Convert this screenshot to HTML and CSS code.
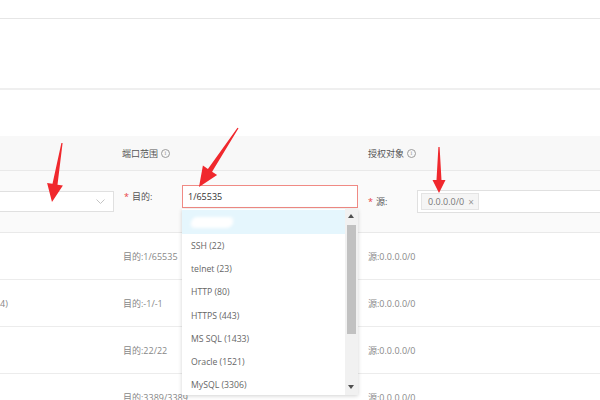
FILE: index.html
```html
<!DOCTYPE html>
<html lang="zh">
<head>
<meta charset="utf-8">
<title>安全组规则</title>
<link rel="stylesheet" href="styles.css">
</head>
<body>
<div class="page">
  <div class="bar-top"></div>
  <div class="band"></div>
  <div class="gap"></div>

  <div class="grid thead">
    <div class="c1"></div>
    <div class="c2 th">端口范围 <span class="info">i</span></div>
    <div class="c3 th">授权对象 <span class="info">i</span></div>
  </div>

  <div class="grid form-row">
    <div class="c1 form-c1">
      <div class="select">
        <svg class="chev" width="9" height="6" viewBox="0 0 9 6"><polyline points="0.5,0.5 4.5,4.5 8.5,0.5" fill="none" stroke="#c4c4c4" stroke-width="1"/></svg>
      </div>
    </div>
    <div class="c2 form-c2">
      <span class="lbl"><span class="star">*</span>目的:</span>
      <div class="input">1/65535</div>
    </div>
    <div class="c3 form-c3">
      <span class="lbl"><span class="star">*</span>源:</span>
      <div class="tags"><span class="tag">0.0.0.0/0<span class="x">×</span></span></div>
    </div>
  </div>

  <div class="grid row">
    <div class="c1"></div>
    <div class="c2 cell">目的:1/65535</div>
    <div class="c3 cell">源:0.0.0.0/0</div>
  </div>
  <div class="grid row">
    <div class="c1 cell c1cell">4)</div>
    <div class="c2 cell">目的:-1/-1</div>
    <div class="c3 cell">源:0.0.0.0/0</div>
  </div>
  <div class="grid row">
    <div class="c1"></div>
    <div class="c2 cell">目的:22/22</div>
    <div class="c3 cell">源:0.0.0.0/0</div>
  </div>
  <div class="grid row">
    <div class="c1"></div>
    <div class="c2 cell">目的:3389/3389</div>
    <div class="c3 cell">源:0.0.0.0/0</div>
  </div>

  <div class="dropdown">
    <ul class="options">
      <li class="opt active"><span class="blur"></span></li>
      <li class="opt">SSH (22)</li>
      <li class="opt">telnet (23)</li>
      <li class="opt">HTTP (80)</li>
      <li class="opt">HTTPS (443)</li>
      <li class="opt">MS SQL (1433)</li>
      <li class="opt">Oracle (1521)</li>
      <li class="opt">MySQL (3306)</li>
    </ul>
    <div class="scrollbar">
      <span class="sb-up"></span>
      <span class="sb-thumb"></span>
      <span class="sb-down"></span>
    </div>
  </div>

  <svg class="arrows" width="600" height="400" viewBox="0 0 600 400">
    <polygon fill="#f0282d" points="61.4,142.9 52.5,183.8 47.1,182.9 52,202 62.9,185.6 57.5,184.7 62.6,143.1"/>
    <polygon fill="#f0282d" points="237.5,127.7 207.9,168.9 202.9,165.6 199,187 217.1,175 212.1,171.7 238.5,128.3"/>
    <polygon fill="#f0282d" points="438.4,147 436.5,180 432.5,180 439,193 445.5,180 441.5,180 439.6,147"/>
  </svg>
</div>
</body>
</html>
```

FILE: styles.css
```css
html, body {
  margin: 0;
  padding: 0;
  background: #fff;
}
body {
  width: 600px;
  height: 400px;
  overflow: hidden;
  font-family: "Open Sans", "Noto Sans CJK SC", sans-serif;
  font-size: 9px;
  color: #666;
}
.page {
  position: relative;
  width: 600px;
  height: 400px;
  overflow: hidden;
}
.bar-top {
  height: 18px;
  border-bottom: 1px solid #e6e6e6;
}
.band {
  height: 69px;
  border-bottom: 2px solid #efefef;
}
.gap {
  height: 46px;
}
.grid {
  display: grid;
  grid-template-columns: 114px 244px 1fr;
}
.thead {
  height: 34px;
  background: #f8f8f8;
  border-bottom: 1px solid #e9e9e9;
  align-items: center;
}
.th {
  padding-left: 8px;
  color: #555;
  font-size: 9px;
  display: flex;
  align-items: center;
  gap: 3px;
}
.c3.th {
  padding-left: 10px;
}
.info {
  display: inline-flex;
  align-items: center;
  justify-content: center;
  width: 7px;
  height: 7px;
  border: 1px solid #9a9a9a;
  border-radius: 50%;
  font-size: 6.5px;
  line-height: 1;
  color: #9a9a9a;
  font-family: "Liberation Serif", serif;
}
.form-row {
  height: 61px;
  background: #fafafa;
  border-bottom: 1px solid #e9e9e9;
}
.form-c1 {
  display: flex;
  align-items: center;
}
.select {
  margin-left: -10px;
  width: calc(100% + 10px);
  height: 21px;
  border: 1px solid #e0e0e0;
  background: #fff;
  display: flex;
  align-items: center;
  justify-content: flex-end;
  padding-right: 8px;
  box-sizing: border-box;
}
.chev {
  display: block;
}
.lbl {
  color: #555;
  font-size: 9px;
}
.star {
  color: #e84040;
  margin-right: 3px;
}
.form-c2 {
  display: flex;
  align-items: center;
  padding: 14px 0 0 10px;
  align-self: start;
}
.form-c2 .lbl {
  width: 58px;
  flex: none;
}
.input {
  width: 176px;
  height: 23px;
  box-sizing: border-box;
  border: 1px solid #f08a84;
  background: #fff;
  padding-left: 5px;
  display: flex;
  align-items: center;
  color: #333;
  font-size: 9px;
}
.form-c3 {
  display: flex;
  align-items: center;
  padding-left: 10px;
}
.form-c3 .lbl {
  width: 49px;
  flex: none;
}
.tags {
  flex: 1;
  height: 23px;
  box-sizing: border-box;
  border: 1px solid #e0e0e0;
  background: #fff;
  margin-right: -10px;
  display: flex;
  align-items: center;
  padding-left: 3px;
}
.tag {
  display: inline-flex;
  align-items: center;
  height: 17px;
  box-sizing: border-box;
  padding: 0 4px 0 6px;
  background: #f5f5f5;
  border: 1px solid #e4e4e4;
  color: #777;
  font-size: 9px;
}
.x {
  margin-left: 4px;
  color: #999;
  font-size: 10px;
  line-height: 1;
}
.row {
  height: 46px;
  border-bottom: 1px solid #ececec;
  align-items: center;
}
.cell {
  color: #888;
  font-size: 9px;
}
.c2.cell {
  padding-left: 9px;
}
.c3.cell {
  padding-left: 10px;
}
.c1cell {
  padding-left: 0;
}
.dropdown {
  position: absolute;
  left: 182px;
  top: 209px;
  width: 176px;
  height: 186px;
  background: #fff;
  box-shadow: 0 1px 4px rgba(0, 0, 0, 0.18);
  overflow: hidden;
  display: flex;
}
.options {
  list-style: none;
  margin: 0;
  padding: 1px 0 0;
  flex: 1;
}
.opt {
  height: 23.3px;
  display: flex;
  align-items: center;
  padding-left: 9px;
  color: #666;
  font-size: 8.7px;
}
.opt.active {
  height: 24px;
  background: #e5f6fd;
}
.blur {
  display: block;
  width: 42px;
  height: 11px;
  background: #fff;
  border-radius: 5px;
  filter: blur(1.5px);
  transform: skewX(-12deg);
}
.scrollbar {
  width: 13px;
  background: #f1f1f1;
  position: relative;
  flex: none;
}
.sb-up, .sb-down {
  position: absolute;
  left: 3px;
  width: 0;
  height: 0;
  border-left: 3.5px solid transparent;
  border-right: 3.5px solid transparent;
}
.sb-up {
  top: 5px;
  border-bottom: 4px solid #505050;
}
.sb-down {
  bottom: 6px;
  border-top: 4px solid #505050;
}
.sb-thumb {
  position: absolute;
  left: 2px;
  top: 16px;
  width: 9px;
  height: 109px;
  background: #c1c1c1;
}
.arrows {
  position: absolute;
  left: 0;
  top: 0;
  pointer-events: none;
}
```
